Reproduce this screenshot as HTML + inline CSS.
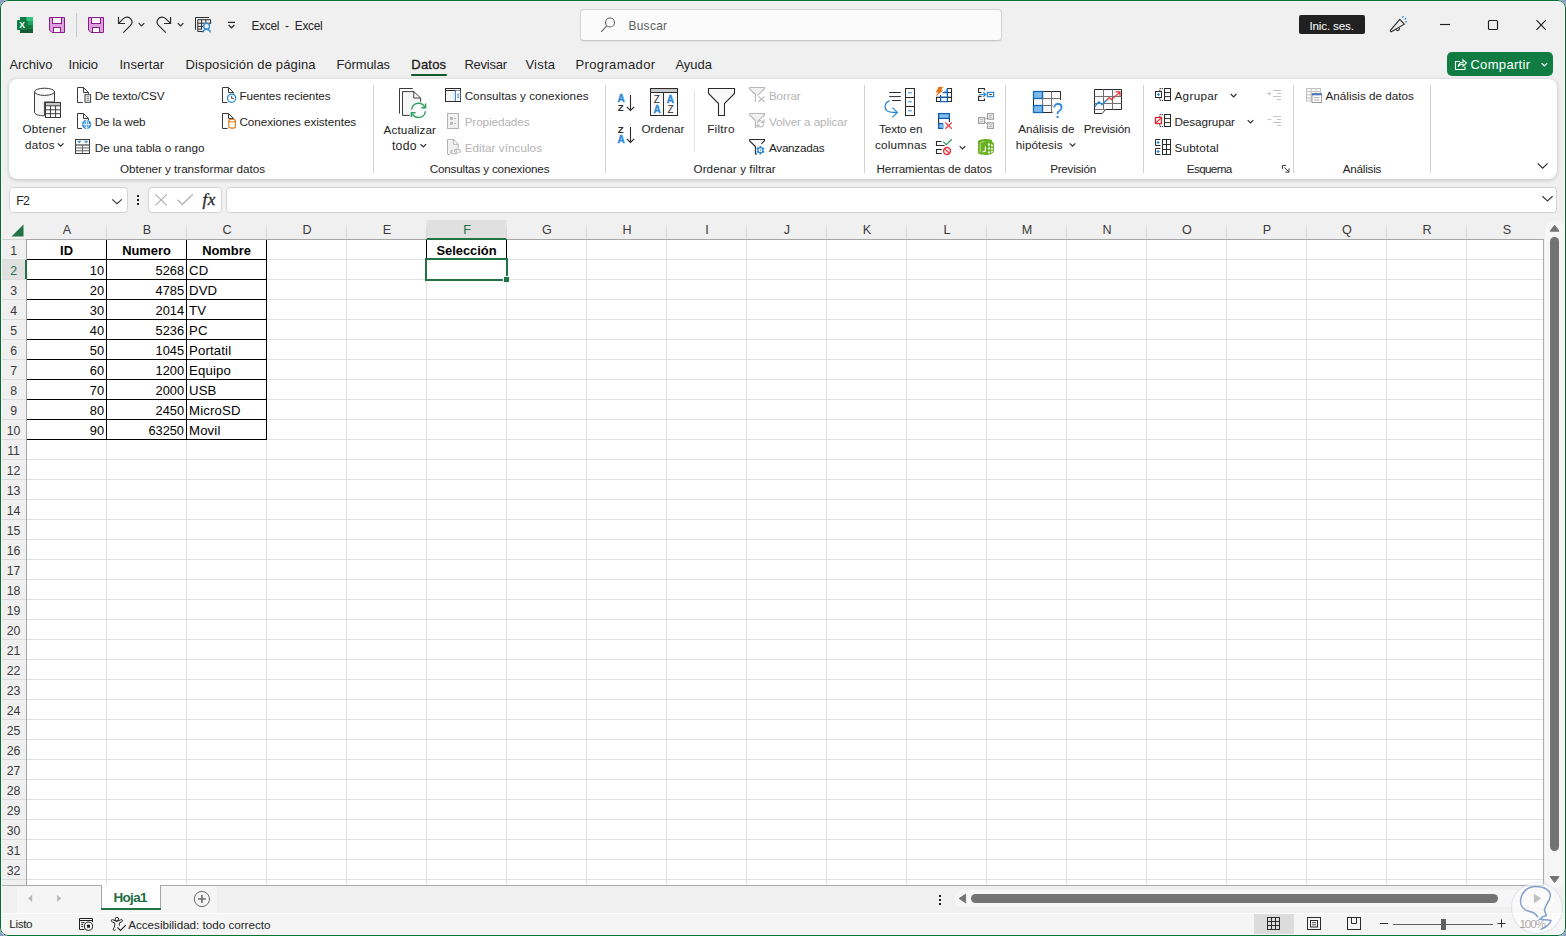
<!DOCTYPE html>
<html lang="es"><head><meta charset="utf-8"><title>Excel - Excel</title>
<style>
html,body{margin:0;padding:0;background:#8b9ccb;}
body{width:1566px;height:936px;overflow:hidden;font-family:"Liberation Sans",sans-serif;color:#242424;}
#win{position:absolute;left:0;top:0;width:1566px;height:936px;background:#f0f0f0;overflow:hidden;border-radius:8px;}
#win>*{position:absolute;}
#frame{left:0;top:0;width:1564px;height:934px;border:1px solid #00722e;border-radius:8px;box-shadow:inset 0 0 0 1px #fcf8fc;z-index:50;pointer-events:none;}
.t{position:absolute;white-space:pre;line-height:16px;color:#242424;z-index:5;}
.box{background:#fff;border:1px solid #d4d4d4;border-radius:4px;box-sizing:border-box;}
#search{left:580px;top:9px;width:422px;height:32px;background:#fbfbfb;border:1px solid #d4d4d4;border-bottom-color:#c6c6c6;border-radius:4px;box-sizing:border-box;box-shadow:0 1px 1px rgba(0,0,0,.05);}
#signin{left:1299px;top:15px;width:66px;height:19px;background:#212121;border-radius:2px;}
#share{left:1447px;top:52px;width:106px;height:24px;background:#107c41;border-radius:5px;}
#ribbon{left:9px;top:79px;width:1548px;height:100px;background:#fff;border-radius:8px;box-shadow:0 1px 4px rgba(0,0,0,.20),0 0 1px rgba(0,0,0,.10);}
.sep{width:1px;top:85px;height:88px;background:#d2d2d2;}
#tabul{left:411px;top:74px;width:36px;height:2px;background:#0e5c2c;border-radius:1px;}
#namebox{left:9px;top:187px;width:119px;height:26px;}
#fxbox{left:148px;top:187px;width:74px;height:26px;}
#fbar{left:226px;top:187px;width:1331px;height:26px;}
svg{overflow:visible;}
.ic{position:absolute;z-index:4;}
/* sheet */
#sheet{left:1px;top:221px;width:1543px;height:664px;background:#fff;}
#grid{left:27px;top:240px;width:1516px;height:645px;background-color:#fff;
 background-image:linear-gradient(to right,transparent 79px,#e1e1e1 79px),linear-gradient(to bottom,transparent 19px,#e1e1e1 19px);
 background-size:80px 20px,80px 20px;}
#colhdr{left:1px;top:221px;width:1543px;height:18px;background:#f0f0f0;border-bottom:1px solid #a6a6a6;}
#rowhdr{left:1px;top:240px;width:25px;height:645px;background:#f0f0f0;border-right:1px solid #a6a6a6;}
.ch{position:absolute;top:221px;width:80px;height:18px;line-height:19px;text-align:center;font-size:12.6px;color:#3b3b3b;z-index:3;}
.chs{position:absolute;top:221px;width:1px;height:18px;background:linear-gradient(to bottom,#efefef,#dcdcdc 40%,#d6d6d6);z-index:3;}
.rh{position:absolute;left:1px;width:25px;height:19px;line-height:23px;text-align:center;font-size:12.3px;color:#3b3b3b;z-index:3;letter-spacing:-0.2px;}
.rhs{position:absolute;left:1px;width:25px;height:1px;background:#dcdcdc;z-index:3;}
.c{position:absolute;height:19px;line-height:21px;font-size:13.2px;color:#000;z-index:3;white-space:pre;box-sizing:border-box;}
.c.r{text-align:right;padding-right:2px;font-size:12.8px;}
.c.l{text-align:left;padding-left:2px;letter-spacing:0.15px;}
.c.b{text-align:center;font-weight:700;font-size:12.9px;}
.bl{position:absolute;background:#000;z-index:3;}
#vscroll{left:1544px;top:221px;width:21px;height:664px;background:#f0f0f0;}
#tabbar{left:1px;top:885px;width:1564px;height:26px;background:#f0f0f0;}
#status{left:1px;top:913px;width:1564px;height:22px;background:#f5f5f5;}

</style></head>
<body>
<div id="win">
<div id="search"></div>
<div id="signin"></div>
<div id="share"></div>
<div id="tabul"></div>
<div id="ribbon"></div>
<div class="sep" style="left:373px"></div>
<div class="sep" style="left:605px"></div>
<div class="sep" style="left:864px"></div>
<div class="sep" style="left:1005px"></div>
<div class="sep" style="left:1143px"></div>
<div class="sep" style="left:1293px"></div>
<div class="sep" style="left:1430px"></div>
<div class="sep" style="left:694px;top:90px;height:62px;background:#e4e4e4"></div>
<div id="namebox" class="box"></div>
<div id="fxbox" class="box"></div>
<div id="fbar" class="box"></div>
<div id="frame"></div>
<div id="tabstrip" style="left:17px;top:886px;width:200px;height:27px;background:#f5f5f5;z-index:1"></div>
<div id="gridbot" style="left:1px;top:885px;width:1543px;height:1px;background:#ababab;z-index:3"></div>
<div id="gridright" style="left:1543px;top:239px;width:1px;height:647px;background:#ababab;z-index:3"></div>
<div id="hoja" style="left:101px;top:885px;width:58px;height:23px;background:#fff;border-left:1px solid #a6a6a6;border-right:1px solid #a6a6a6;z-index:4"></div>
<div style="left:101px;top:908px;width:60px;height:2px;background:#217346;z-index:4"></div>
<div id="viewsel" style="left:1254px;top:914px;width:40px;height:21px;background:#dcdcdc;z-index:2"></div>
<div style="left:1px;top:913px;width:1564px;height:1px;background:#fff;z-index:2"></div>
<div id="wm" style="left:1512px;top:883px;width:50px;height:50px;border-radius:50%;background:rgba(255,255,255,.55);box-shadow:0 0 0 1px rgba(150,175,215,.25);z-index:20"></div>
<svg class="ic" style="left:0;top:0;z-index:21" width="1566" height="936" viewBox="0 0 1566 936" fill="none"><path d="M1537.6 916.9C1535.6 913.6 1532.6 912.2 1529.8 911.6C1523.4 910 1520 905.6 1520.6 900.3C1521.4 892 1527.6 886.6 1535.5 886.6C1544.4 886.6 1550.8 890.4 1550.3 896C1549.8 901.4 1545.6 904.6 1544.6 909.5C1544.2 912 1546 913.4 1546.4 915.5C1543.6 916 1541.6 917.4 1539.7 919.3C1543.4 919.9 1547.4 919.4 1551 920.4C1549.4 924.6 1545.4 927.6 1541.1 929.2" stroke="#6c8fc8" stroke-width="1.5" stroke-linecap="round" opacity=".85"/></svg>
<div id="botwhite" style="left:1px;top:934px;width:1564px;height:1px;background:#fbfbfb;z-index:2"></div>
<div id="cornerline" style="left:1px;top:239px;width:25px;height:1px;background:#d2d2d2;z-index:4"></div>

<div id="grid"></div>
<div id="colhdr"></div>
<div id="rowhdr"></div>
<div id="vscroll"></div>
<div id="tabbar"></div>
<div id="status"></div>
<div style="left:426px;top:220px;width:81px;height:18px;background:#e0e0e0;border-bottom:2px solid #217346;z-index:2"></div>
<div style="left:1px;top:260px;width:24px;height:19px;background:#e0e0e0;border-right:2px solid #217346;z-index:4"></div>
<div class="ch" style="left:27px;width:80px">A</div>
<div class="ch" style="left:107px;width:80px">B</div>
<div class="chs" style="left:106px"></div>
<div class="ch" style="left:187px;width:80px">C</div>
<div class="chs" style="left:186px"></div>
<div class="ch" style="left:267px;width:80px">D</div>
<div class="chs" style="left:266px"></div>
<div class="ch" style="left:347px;width:80px">E</div>
<div class="chs" style="left:346px"></div>
<div class="ch" style="left:427px;width:80px;color:#217346">F</div>
<div class="chs" style="left:426px"></div>
<div class="ch" style="left:507px;width:80px">G</div>
<div class="chs" style="left:506px"></div>
<div class="ch" style="left:587px;width:80px">H</div>
<div class="chs" style="left:586px"></div>
<div class="ch" style="left:667px;width:80px">I</div>
<div class="chs" style="left:666px"></div>
<div class="ch" style="left:747px;width:80px">J</div>
<div class="chs" style="left:746px"></div>
<div class="ch" style="left:827px;width:80px">K</div>
<div class="chs" style="left:826px"></div>
<div class="ch" style="left:907px;width:80px">L</div>
<div class="chs" style="left:906px"></div>
<div class="ch" style="left:987px;width:80px">M</div>
<div class="chs" style="left:986px"></div>
<div class="ch" style="left:1067px;width:80px">N</div>
<div class="chs" style="left:1066px"></div>
<div class="ch" style="left:1147px;width:80px">O</div>
<div class="chs" style="left:1146px"></div>
<div class="ch" style="left:1227px;width:80px">P</div>
<div class="chs" style="left:1226px"></div>
<div class="ch" style="left:1307px;width:80px">Q</div>
<div class="chs" style="left:1306px"></div>
<div class="ch" style="left:1387px;width:80px">R</div>
<div class="chs" style="left:1386px"></div>
<div class="ch" style="left:1467px;width:80px">S</div>
<div class="chs" style="left:1466px"></div>
<div class="rh" style="top:240px">1</div>
<div class="rhs" style="top:259px"></div>
<div class="rh" style="top:260px;color:#217346;z-index:5">2</div>
<div class="rhs" style="top:279px"></div>
<div class="rh" style="top:280px">3</div>
<div class="rhs" style="top:299px"></div>
<div class="rh" style="top:300px">4</div>
<div class="rhs" style="top:319px"></div>
<div class="rh" style="top:320px">5</div>
<div class="rhs" style="top:339px"></div>
<div class="rh" style="top:340px">6</div>
<div class="rhs" style="top:359px"></div>
<div class="rh" style="top:360px">7</div>
<div class="rhs" style="top:379px"></div>
<div class="rh" style="top:380px">8</div>
<div class="rhs" style="top:399px"></div>
<div class="rh" style="top:400px">9</div>
<div class="rhs" style="top:419px"></div>
<div class="rh" style="top:420px">10</div>
<div class="rhs" style="top:439px"></div>
<div class="rh" style="top:440px">11</div>
<div class="rhs" style="top:459px"></div>
<div class="rh" style="top:460px">12</div>
<div class="rhs" style="top:479px"></div>
<div class="rh" style="top:480px">13</div>
<div class="rhs" style="top:499px"></div>
<div class="rh" style="top:500px">14</div>
<div class="rhs" style="top:519px"></div>
<div class="rh" style="top:520px">15</div>
<div class="rhs" style="top:539px"></div>
<div class="rh" style="top:540px">16</div>
<div class="rhs" style="top:559px"></div>
<div class="rh" style="top:560px">17</div>
<div class="rhs" style="top:579px"></div>
<div class="rh" style="top:580px">18</div>
<div class="rhs" style="top:599px"></div>
<div class="rh" style="top:600px">19</div>
<div class="rhs" style="top:619px"></div>
<div class="rh" style="top:620px">20</div>
<div class="rhs" style="top:639px"></div>
<div class="rh" style="top:640px">21</div>
<div class="rhs" style="top:659px"></div>
<div class="rh" style="top:660px">22</div>
<div class="rhs" style="top:679px"></div>
<div class="rh" style="top:680px">23</div>
<div class="rhs" style="top:699px"></div>
<div class="rh" style="top:700px">24</div>
<div class="rhs" style="top:719px"></div>
<div class="rh" style="top:720px">25</div>
<div class="rhs" style="top:739px"></div>
<div class="rh" style="top:740px">26</div>
<div class="rhs" style="top:759px"></div>
<div class="rh" style="top:760px">27</div>
<div class="rhs" style="top:779px"></div>
<div class="rh" style="top:780px">28</div>
<div class="rhs" style="top:799px"></div>
<div class="rh" style="top:800px">29</div>
<div class="rhs" style="top:819px"></div>
<div class="rh" style="top:820px">30</div>
<div class="rhs" style="top:839px"></div>
<div class="rh" style="top:840px">31</div>
<div class="rhs" style="top:859px"></div>
<div class="rh" style="top:860px">32</div>
<div class="rhs" style="top:879px"></div>
<div class="rhs" style="top:880px;height:5px;background:#f0f0f0"></div>
<svg class="ic" style="left:10.5px;top:223.6px" width="13" height="13" viewBox="0 0 13 13"><path d="M12.5 0.5V12.5H0.5Z" fill="#217346"/></svg>
<div class="c b" style="left:27px;top:240px;width:79px">ID</div>
<div class="c b" style="left:107px;top:240px;width:79px">Numero</div>
<div class="c b" style="left:187px;top:240px;width:79px">Nombre</div>
<div class="c r" style="left:27px;top:260px;width:79px">10</div>
<div class="c r" style="left:107px;top:260px;width:79px">5268</div>
<div class="c l" style="left:187px;top:260px;width:79px">CD</div>
<div class="c r" style="left:27px;top:280px;width:79px">20</div>
<div class="c r" style="left:107px;top:280px;width:79px">4785</div>
<div class="c l" style="left:187px;top:280px;width:79px">DVD</div>
<div class="c r" style="left:27px;top:300px;width:79px">30</div>
<div class="c r" style="left:107px;top:300px;width:79px">2014</div>
<div class="c l" style="left:187px;top:300px;width:79px">TV</div>
<div class="c r" style="left:27px;top:320px;width:79px">40</div>
<div class="c r" style="left:107px;top:320px;width:79px">5236</div>
<div class="c l" style="left:187px;top:320px;width:79px">PC</div>
<div class="c r" style="left:27px;top:340px;width:79px">50</div>
<div class="c r" style="left:107px;top:340px;width:79px">1045</div>
<div class="c l" style="left:187px;top:340px;width:79px">Portatil</div>
<div class="c r" style="left:27px;top:360px;width:79px">60</div>
<div class="c r" style="left:107px;top:360px;width:79px">1200</div>
<div class="c l" style="left:187px;top:360px;width:79px">Equipo</div>
<div class="c r" style="left:27px;top:380px;width:79px">70</div>
<div class="c r" style="left:107px;top:380px;width:79px">2000</div>
<div class="c l" style="left:187px;top:380px;width:79px">USB</div>
<div class="c r" style="left:27px;top:400px;width:79px">80</div>
<div class="c r" style="left:107px;top:400px;width:79px">2450</div>
<div class="c l" style="left:187px;top:400px;width:79px">MicroSD</div>
<div class="c r" style="left:27px;top:420px;width:79px">90</div>
<div class="c r" style="left:107px;top:420px;width:79px">63250</div>
<div class="c l" style="left:187px;top:420px;width:79px">Movil</div>
<div class="c b" style="left:427px;top:240px;width:79px">Selección</div>
<div class="bl" style="left:106px;top:240px;width:1px;height:200px"></div>
<div class="bl" style="left:186px;top:240px;width:1px;height:200px"></div>
<div class="bl" style="left:266px;top:240px;width:1px;height:200px"></div>
<div class="bl" style="left:27px;top:259px;width:240px;height:1px"></div>
<div class="bl" style="left:27px;top:279px;width:240px;height:1px"></div>
<div class="bl" style="left:27px;top:299px;width:240px;height:1px"></div>
<div class="bl" style="left:27px;top:319px;width:240px;height:1px"></div>
<div class="bl" style="left:27px;top:339px;width:240px;height:1px"></div>
<div class="bl" style="left:27px;top:359px;width:240px;height:1px"></div>
<div class="bl" style="left:27px;top:379px;width:240px;height:1px"></div>
<div class="bl" style="left:27px;top:399px;width:240px;height:1px"></div>
<div class="bl" style="left:27px;top:419px;width:240px;height:1px"></div>
<div class="bl" style="left:27px;top:439px;width:240px;height:1px"></div>
<div style="left:425px;top:258px;width:79px;height:19px;border:2px solid #217346;z-index:6"></div>
<div class="bl" style="left:426px;top:240px;width:1px;height:18px"></div>
<div class="bl" style="left:506px;top:240px;width:1px;height:18px"></div>
<div style="left:503px;top:276px;width:5px;height:5px;background:#217346;border:1px solid #fff;border-right:0;border-bottom:0;z-index:7"></div>
<svg id="icons" class="ic" style="left:0;top:0" width="1566" height="936" viewBox="0 0 1566 936" fill="none" stroke-linecap="butt" stroke-linejoin="miter">
<defs>
<path id="chev" d="M-2.8 -1.4L0 1.4L2.8 -1.4" stroke-width="1.2" fill="none"/>
<path id="doc" d="M6 15H0.5V0.5H6.5L11.5 5.5V7.5M6.5 0.5V5.5H11.5" stroke="#3b3b3b" stroke-width="1" fill="none"/>
<path id="funnel" d="M0.5 0.5H15.5V1.7L8.6 8.4M0.5 0.5V1.7L6.4 7.6V15" stroke-width="1.1" fill="none"/>
</defs>
<!-- ===== title bar ===== -->
<g id="xl-logo">
<rect x="20" y="17" width="13" height="16" rx="0.8" fill="#21a366"/>
<rect x="20" y="17" width="6.5" height="4" fill="#107c41"/><rect x="26.5" y="17" width="6.5" height="4" fill="#33c481"/>
<rect x="20" y="21" width="6.5" height="4" fill="#185c37"/><rect x="26.5" y="21" width="6.5" height="4" fill="#21a366"/>
<rect x="20" y="25" width="13" height="4" fill="#107c41"/><rect x="20" y="29" width="13" height="4" rx="0.8" fill="#185c37"/>
<rect x="20.5" y="21" width="7.5" height="10" fill="#0b5430" opacity=".55"/>
<rect x="17" y="20" width="10" height="10" rx="0.8" fill="#107c41"/>
<text x="22" y="28.2" font-family="Liberation Sans, sans-serif" font-weight="700" font-size="8.6" fill="#fff" stroke="none" text-anchor="middle">X</text>
</g>
<g id="save1" stroke="#8b1a8b" stroke-width="1">
<path d="M49.5 17.5H64.5V32.5H52L49.5 30Z" fill="#dca0dc"/>
<rect x="52.5" y="17.5" width="9" height="6" fill="#fbfbfb"/>
<rect x="53.5" y="27.5" width="7" height="5" fill="#fbfbfb"/>
</g>
<path d="M76.5 13V37" stroke="#c8c8c8"/>
<g id="save2" stroke="#8b1a8b" stroke-width="1">
<path d="M88.5 17.5H103.5V32.5H91L88.5 30Z" fill="#dca0dc"/>
<rect x="91.5" y="17.5" width="9" height="6" fill="#fbfbfb"/>
<rect x="92.5" y="27.5" width="7" height="5" fill="#fbfbfb"/>
</g>
<g stroke="#2b2b2b" stroke-width="1.15">
<path d="M118.5 17V23.5H125M118.9 23.1L123.4 18.7C125.6 16.6 129 16.7 130.8 18.9C132.5 21 132.2 23.8 130.3 25.7L123.3 32.6"/>
<path d="M170.6 17V23.5H164.1M170.2 23.1L165.7 18.7C163.5 16.6 160.1 16.7 158.3 18.9C156.6 21 156.9 23.8 158.8 25.7L165.8 32.6"/>
<use href="#chev" x="141.5" y="24.6"/><use href="#chev" x="180.6" y="24.6"/>
<path d="M228 22.4H235M228.6 25L231.5 27.8L234.4 25" stroke-width="1.2"/>
</g>
<g id="tblperson" stroke="#2b2b2b" stroke-width="1">
<path d="M209 17.5H195.5V29.8"/>
<path d="M204 31.5H197.8V19.7H210.6V24M197.8 23.2H210M197.8 26.4H203M197.8 29.2H202M201.6 19.7V29M205.8 19.7V22.6"/>
<circle cx="206.6" cy="26.2" r="2.9" stroke="#2b88d8" stroke-width="1.3" fill="#f0f0f0"/>
<path d="M202.8 32.5C203 30.2 204.5 29.4 206.6 29.4S210.2 30.2 210.4 32.5" stroke="#2b88d8" stroke-width="1.3"/>
</g>
<!-- search -->
<g stroke="#616161" stroke-width="1.1"><circle cx="610" cy="22.5" r="4.5"/><path d="M606.7 25.9L601.2 31.8"/></g>
<!-- window controls -->
<g stroke="#1f1f1f" stroke-width="1.15">
<path d="M1440 24.5H1450"/>
<rect x="1488.5" y="20.5" width="9" height="9" rx="1"/>
<path d="M1536.5 20.2L1545.8 29.8M1545.8 20.2L1536.5 29.8"/>
</g>
<g id="mega" stroke="#2b2b2b" stroke-width="1.15">
<path d="M1399.8 19.3L1404.3 24.2L1391.8 31.6C1390.8 32 1390 31 1390.6 30.2Z"/>
<path d="M1396.2 29.6C1397 31.2 1399.4 31 1399.6 28"/>
<path d="M1402.5 17.8L1403.3 16M1404.6 19.6L1406.2 18M1405.2 22L1407 21.6" stroke="#2b88d8"/>
</g>
<!-- share -->
<g stroke="#fff" stroke-width="1.1">
<path d="M1460 61.5H1455.5V69.5H1465V66.5"/>
<path d="M1458.2 66.6C1458.6 63.6 1460.6 62.2 1463 62.2V59.8L1466.4 63L1463 66.2V64C1461 64 1459.4 64.8 1458.2 66.6Z"/>
<use href="#chev" x="1544.4" y="64.6" stroke-width="1.3"/>
</g>
<!-- ===== ribbon group 1 ===== -->
<g id="getdata" stroke="#3b3b3b" stroke-width="1">
<path d="M34.5 91.8V112C34.5 114.2 38.6 115.8 44.4 115.8V102H54.5V91.8" fill="#f8f8f8"/>
<ellipse cx="44.5" cy="91.8" rx="10" ry="3.6" fill="#fbfbfb"/>
<rect x="45.5" y="102.5" width="15" height="15" fill="#fff"/>
<rect x="46" y="103" width="14" height="2.4" fill="#c8c8c8" stroke="none"/>
<path d="M45.5 105.8H60.5M45.5 109.8H60.5M45.5 113.7H60.5M50.5 105.8V117.5M55.6 105.8V117.5"/>
</g>
<use href="#chev" x="60.7" y="144.7" stroke="#2b2b2b"/>
<g transform="translate(77,87)"><path d="M5.8 15.5H0.5V0.5H6.5L11.5 5.5V7M6.5 0.5V5.5H11.5" stroke="#3b3b3b"/><rect x="8" y="7.7" width="5.6" height="7.6" stroke="#3b3b3b" fill="#fff"/><path d="M9.6 9.8H12.2M9.6 11.6H12.2M9.6 13.3H12.2" stroke="#555" stroke-width=".8"/></g>
<g transform="translate(77,113)"><path d="M5 15.5H0.5V0.5H6.5L11.5 5.5V7M6.5 0.5V5.5H11.5" stroke="#3b3b3b"/><circle cx="9.6" cy="11.4" r="4.6" fill="#2b88d8"/><path d="M5.6 11.4H13.6M9.6 7.4V15.4" stroke="#fff" stroke-width=".9"/><ellipse cx="9.6" cy="11.4" rx="2" ry="4" stroke="#fff" stroke-width=".7"/></g>
<g id="tblrange" stroke="#3b3b3b" stroke-width="1">
<rect x="75.5" y="139.5" width="14" height="14" fill="#fff"/>
<path d="M75.5 145H89.5" stroke-width="1.3" stroke="#666"/><path d="M75.5 147.9H89.5M75.5 150.8H89.5M82.5 145V153.5" stroke="#666"/>
<path d="M77.6 141.2H81L79.3 142.9ZM84.4 141.2H87.8L86.1 142.9Z" fill="#2b88d8" stroke="#2b88d8" stroke-width=".6"/>
</g>
<g transform="translate(222,87)"><path d="M5.4 15.5H0.5V0.5H6.5L11.5 5.5V6.6M6.5 0.5V5.5H11.5" stroke="#3b3b3b"/><circle cx="9.6" cy="11.2" r="4.1" stroke="#2b88d8" stroke-width="1.3" fill="#fff"/><path d="M9.6 8.8V11.4H11.8" stroke="#3b3b3b" stroke-width=".9"/></g>
<g transform="translate(222,113)"><path d="M5.6 15.5H0.5V0.5H6.5L11.5 5.5V6M6.5 0.5V5.5H11.5" stroke="#3b3b3b"/><path d="M6.8 7.6V13.8C6.8 15.6 13.4 15.6 13.4 13.8V7.6" stroke="#e07a1a" stroke-width="1.2" fill="#fff"/><ellipse cx="10.1" cy="7.6" rx="3.3" ry="1.4" stroke="#e07a1a" stroke-width="1.1" fill="#fff"/></g>
<!-- ===== group 2 ===== -->
<g id="refresh" stroke="#3b3b3b" stroke-width="1">
<path d="M412.8 88.5H399.5V113.6"/>
<path d="M409.8 115.4H402.5V91.6H413.8L420.6 98V101.8M413.8 91.6V98H420.6" fill="#f6f6f6"/>
<g stroke="#2e9f5e" stroke-width="1.5">
<path d="M411.6 109.4C412 105.4 415.2 103.2 418.6 103.2C421.2 103.2 423.4 104.6 424.6 106.8"/>
<path d="M425.6 103.6V107.8H421.4" stroke-width="1.4"/>
<path d="M425.4 111.2C425 115.2 421.8 117.4 418.4 117.4C415.8 117.4 413.6 116 412.4 113.8"/>
<path d="M411.4 117V112.8H415.6" stroke-width="1.4"/>
</g></g>
<use href="#chev" x="423.3" y="145.5" stroke="#2b2b2b"/>
<g id="qc" stroke="#2b2b2b" stroke-width="1">
<rect x="445.5" y="88.5" width="15" height="13" fill="#f6f6f6"/>
<path d="M445.5 90.5H460.5"/>
<rect x="455.8" y="90.5" width="4.4" height="10.5" fill="#fff" stroke="none"/>
<path d="M455.4 90.5V101" stroke="#2b88d8" stroke-width="1.1"/>
<path d="M457.2 94.3H459.2M457.2 96H459.2M457.2 97.7H459.2" stroke="#2b88d8" stroke-width=".9"/>
</g>
<g id="props" stroke="#b4b4b4" stroke-width="1">
<rect x="447.5" y="113.5" width="11" height="15" fill="#f1f1f1"/>
<rect x="450.6" y="117.6" width="1.8" height="1.8"/><rect x="450.6" y="122.5" width="1.8" height="1.8"/>
<path d="M454.2 118.5H456M454.2 123.4H456"/>
</g>
<g id="editlinks" stroke="#b4b4b4" stroke-width="1">
<path d="M450 154.5H447.5V139.5H453.5L458.3 144.3V148M453.5 139.5V144.3H458.3" fill="#f1f1f1"/>
<path d="M452.6 150.4C450.4 150.4 450.4 153.8 452.6 153.8H455.4C457.4 153.8 457.6 151.2 456 150.6M455.6 152.4C453.8 151.8 454.2 149.4 456.2 149.4H458.6C460.8 149.4 460.8 152.8 458.6 152.8" stroke-width="1.1"/>
</g>
<!-- ===== group 3 ===== -->
<g font-family="Liberation Sans, sans-serif" font-weight="700" stroke-width=".35">
<text x="617.4" y="101.8" font-size="10" fill="#2b88d8" stroke="#2b88d8">A</text>
<text x="617.8" y="110.9" font-size="9.6" fill="#2b2b2b" stroke="none">Z</text>
<text x="617.8" y="133.4" font-size="9.6" fill="#2b2b2b" stroke="none">Z</text>
<text x="617.4" y="142.9" font-size="10" fill="#2b88d8" stroke="#2b88d8">A</text>
</g>
<g stroke="#2b2b2b" stroke-width="1.1">
<path d="M630.5 95V110.4M626.8 106.8L630.5 110.5L634.2 106.8"/>
<path d="M630.5 127V142.4M626.8 138.8L630.5 142.5L634.2 138.8"/>
</g>
<g id="sort" stroke="#2b2b2b" stroke-width="1">
<rect x="650.5" y="88.5" width="27" height="27" fill="#fafafa"/>
<rect x="651" y="89" width="26" height="3" fill="#c8c8c8" stroke="none"/>
<path d="M650.5 92.5H677.5M663.5 92.5V115.5"/>
<g font-family="Liberation Sans, sans-serif" font-size="10" stroke-width=".3">
<text x="653.8" y="102.5" fill="#2b2b2b" stroke="none">Z</text><text x="653.4" y="112.9" fill="#2b88d8" stroke="#2b88d8" font-weight="700">A</text>
<text x="666.8" y="102.5" fill="#2b88d8" stroke="#2b88d8" font-weight="700">A</text><text x="667.4" y="112.9" fill="#2b2b2b" stroke="none">Z</text>
</g></g>
<path d="M708.5 88.5H734.5V93.4L724.5 103.5V115.5H718.5V103.5L708.5 93.4Z" stroke="#2b2b2b" stroke-width="1.1" fill="#f8f8f8"/>
<g transform="translate(749,87)" stroke="#b8b8b8"><path d="M0.5 0.5H15.5V1.7L8.6 8.4L6.4 7.6L0.5 1.7Z" fill="#f1f1f1" stroke="none"/><use href="#funnel"/><path d="M9.4 9.4L15.6 15M15.6 9.4L9.4 15" stroke-width="1.1"/></g>
<g transform="translate(749,113)" stroke="#b8b8b8"><path d="M0.5 0.5H15.5V1.7L8.6 8.4L6.4 7.6L0.5 1.7Z" fill="#f1f1f1" stroke="none"/><use href="#funnel"/>
<path d="M8 10.4C8.6 7.6 12.6 6.8 14.6 9.2M15 6.8V9.6H12.2M15 11.2C14.4 14 10.4 14.8 8.4 12.4M8 14.8V12H10.8" stroke-width="1.1"/></g>
<g transform="translate(749,139)" stroke="#2b2b2b"><path d="M0.5 0.5H15.5V1.7L8.6 8.4L6.4 7.6L0.5 1.7Z" fill="#f8f8f8" stroke="none"/><path d="M0.5 0.5H15.5V1.7L12.4 4.8M0.5 0.5V1.7L6.4 7.6V15H8" stroke-width="1.1"/>
<path d="M13.48 12.40L15.12 13.35M11.40 13.60L11.40 15.50M9.32 12.40L7.68 13.35M9.32 10.00L7.68 9.05M11.40 8.80L11.40 6.90M13.48 10.00L15.12 9.05" stroke="#2b88d8" stroke-width="1.7"/><circle cx="11.4" cy="11.2" r="2.5" stroke="#2b88d8" stroke-width="1.3" fill="#fff"/><circle cx="11.4" cy="11.2" r=".7" fill="#2b88d8" stroke="none"/></g>
<!-- ===== group 4 ===== -->
<g id="t2c" stroke="#2b2b2b" stroke-width="1">
<path d="M889.2 92.5H900.8M889.2 96.6H900.8M892 100.5H900.8"/>
<rect x="905.5" y="88.5" width="9" height="27" fill="#fafafa"/><path d="M905.5 97.5H914.5M905.5 106.5H914.5"/>
<path d="M908.2 92.8H911.8M908.2 101.8H911.8M908.2 110.8H911.8" stroke="#2b88d8"/>
<path d="M889.6 100.6C884.6 102.6 883.8 108.2 887 110.8C889.4 112.6 893 112.5 897 112.4M892.4 107.6L897.4 112.4L892.4 117.4" stroke="#2b88d8" stroke-width="1.2"/>
</g>
<g id="flash" stroke="#2b2b2b" stroke-width="1.1">
<path d="M947.4 88.5H951.5V101.5H936.5V97.4H951.5M947.4 92.5H951.5"/>
<path d="M947.4 88.4L942.5 92.5H947.4Z" fill="#9cc8ee" stroke="none"/>
<path d="M947.4 88V101.6H940.6V95M942.6 92.6H947.4M940.6 97.4H947.4" stroke="#0f5fb5" stroke-width="1.3"/>
<path d="M938.6 87H943L941 90.4H942.9L936.2 95.9L938.3 92.2H936Z" fill="#e07a1a" stroke="#e07a1a" stroke-width=".4"/>
</g>
<g id="rmdup" stroke-width="1.1">
<rect x="938.6" y="113.6" width="10.8" height="4.8" fill="#85bdec" stroke="#0f5fb5" stroke-width="1.3"/>
<path d="M938.6 118.4V123.4M949.4 118.4V122" stroke="#2b2b2b"/>
<path d="M944.6 125.9L943 123.6H938.6V128.4H943Z" fill="#85bdec" stroke="none"/>
<path d="M943.2 123.6H938.6V128.4H943.2" stroke="#0f5fb5" stroke-width="1.3"/>
<path d="M945.3 122.4L951.8 128.8M951.8 122.4L945.3 128.8" stroke="#e8474c" stroke-width="1.4"/>
</g>
<g id="dataval" stroke="#2b2b2b" stroke-width="1">
<path d="M941.4 141.5H936.5V145.5H944.6M941.8 149.5H936.5V153.5H941.8" stroke-width="1.1"/>
<path d="M943.2 141.6L946.2 144.6L951.8 139.2" stroke="#2e9f5e" stroke-width="1.3"/>
<circle cx="947" cy="151" r="3.4" stroke="#e8363c" stroke-width="1.5" fill="#fff"/><path d="M944.6 148.8L949.4 153.2" stroke="#e8363c" stroke-width="1.4"/>
</g>
<use href="#chev" x="962.5" y="147.6" stroke="#2b2b2b"/>
<g id="consol" stroke="#2b2b2b" stroke-width="1.1">
<path d="M984.4 90.6V88.5H978.6V92.5H981.6M984.4 98.4V100.5H978.6V96.4H981.6"/>
<path d="M979.2 94.5H985.6M983.3 92.2L985.7 94.5L983.3 96.8" stroke="#2b88d8" stroke-width="1.2"/>
<rect x="987.4" y="92.4" width="6.2" height="4.2" stroke="#2b88d8" stroke-width="1.3"/><path d="M989.2 94.5H991.8" stroke-width=".9"/>
</g>
<g id="relat" stroke="#a0a0a0" stroke-width="1.2">
<rect x="978.6" y="117.6" width="5.8" height="5.8" fill="#fafafa"/><rect x="987.6" y="113.6" width="5.8" height="5.6" fill="#fafafa"/><rect x="987.6" y="122.8" width="5.8" height="5.6" fill="#fafafa"/>
<path d="M984.4 119.6L987.6 117.4M984.4 121.4L987.6 124.6" stroke-width="1"/>
<path d="M980 119.6H983M980 121.4H983M989 115.6H992M989 117.2H992M989 124.8H992M989 126.4H992" stroke-width=".8"/>
</g>
<g id="datamodel">
<path d="M978 141.6C978 139.2 986.6 138.2 990.6 139.6C992 140 992.6 140.8 992 141.8L993.9 143V152.2L990 154.6C987.6 155.2 984.6 155 983.4 154.4C981.6 155 979.4 154.4 978 153Z" fill="#6ab023"/>
<path d="M980.4 142.8L984.6 141.4" stroke="#cfe8b4" stroke-width=".7" fill="none"/>
<path d="M980.2 143.2V152.6" stroke="#d8efc2" stroke-width=".8" fill="none"/>
<path d="M985.4 146.4V150.2C985.4 151.6 983.6 152.2 982.6 151.4" stroke="#fff" stroke-width="1.1" fill="none"/>
<path d="M988 143.2L989.8 143.8V145.8L988 145.4ZM991 144.2L992.8 144.8V146.6L991 146.2ZM988 147.4L989.8 147.6V149.6L988 149.6ZM991 147.8L992.8 148V149.6L991 149.8ZM988 151.4L989.8 151.2V153L988 153.4ZM991 151L992.8 150.6V152L991 152.8Z" fill="#fff"/>
</g>
<!-- ===== group 5 ===== -->
<g id="whatif" stroke="#2b2b2b" stroke-width="1">
<rect x="1033.5" y="91.5" width="27" height="21" fill="#fafafa"/>
<path d="M1042.6 91.5V112.5M1051.5 91.5V112.5M1033.5 98.5H1060.5M1033.5 105.5H1060.5" stroke="#707070"/>
<rect x="1033.5" y="91.5" width="9" height="7" fill="#7fb9ea" stroke="#0f6cbd" stroke-width="1.3"/>
<rect x="1033.5" y="105.5" width="9" height="7" fill="#7fb9ea" stroke="#0f6cbd" stroke-width="1.3"/>
<rect x="1052.6" y="100" width="11" height="14" fill="#fff" stroke="none"/>
<text x="1052.6" y="117.7" font-family="Liberation Sans, sans-serif" font-size="21.6" fill="#2b88d8" stroke="none" textLength="10.4" lengthAdjust="spacingAndGlyphs">?</text>
</g>
<use href="#chev" x="1072.5" y="144.7" stroke="#2b2b2b"/>
<g id="forecast" stroke="#2b2b2b" stroke-width="1">
<path d="M1094.5 89.5H1121.5V109.5H1105.8L1102 113.5H1094.5Z" fill="#fafafa"/>
<path d="M1094.5 109.5H1105.8M1094.5 96.5H1121.5M1094.5 103.5H1121.5M1103.5 89.5V109.5M1112.5 89.5V109.5" stroke="#707070"/>
<path d="M1094.8 106.6L1098.8 101.8L1101.8 104.6L1107.2 99.8" stroke="#2b88d8" stroke-width="1.5"/>
<path d="M1107 100L1109 97.6L1111.4 99.6L1119.6 92.4M1115.6 91.8H1120V96.2" stroke="#e8363c" stroke-width="1.25"/>
</g>
<!-- ===== group 6 ===== -->
<g id="grp" stroke="#2b2b2b" stroke-width="1">
<rect x="1164.5" y="88.5" width="6" height="12"/><path d="M1164.5 92.6H1170.5M1164.5 96.6H1170.5"/>
<path d="M1163 88.6H1159.8V91M1159.8 98.2V100.4H1163" stroke-dasharray="1.3 .8" stroke-width="1"/>
<rect x="1155.5" y="91.5" width="6" height="6" fill="#fff"/><path d="M1157 94.5H1160M1158.5 93V96" stroke="#2b88d8" stroke-width="1.2"/>
</g>
<g id="ungrp" stroke="#2b2b2b" stroke-width="1">
<rect x="1164.5" y="114.5" width="6" height="12"/><path d="M1164.5 118.6H1170.5M1164.5 122.6H1170.5"/>
<path d="M1163 114.6H1159.8V117M1159.8 124.2V126.4H1163" stroke-dasharray="1.3 .8" stroke-width="1"/>
<rect x="1155.5" y="117.5" width="6" height="6" fill="#fff" stroke="#e8262d" stroke-width="1.3"/><path d="M1155.8 123.2L1161.2 117.8" stroke="#e8262d" stroke-width="1.1"/>
</g>
<g id="subtot" stroke="#2b2b2b" stroke-width="1">
<rect x="1162.5" y="139.5" width="8" height="15"/><path d="M1166.5 139.5V154.5M1162.5 144.5H1170.5M1162.5 149.5H1170.5"/>
<path d="M1160.4 139.5H1155.5V145.5H1160.4M1160.4 148.5H1155.5V154.5H1160.4"/>
<path d="M1156.6 142.5H1159.6M1158.1 141V144M1156.6 151.5H1159.6M1158.1 150V153" stroke="#2b88d8" stroke-width="1.2"/>
</g>
<use href="#chev" x="1233.6" y="95.4" stroke="#2b2b2b"/><use href="#chev" x="1250.5" y="121.6" stroke="#2b2b2b"/>
<g stroke="#c4c4c4" stroke-width="1">
<path d="M1267.3 93.6H1271.3M1269.3 91.6V95.6M1273 90.5H1281M1277 93.5H1281M1273 96.5H1281M1277 99.5H1281"/>
<path d="M1267.3 119.6H1271.3M1273 116.5H1281M1277 119.5H1281M1273 122.5H1281M1277 125.5H1281"/>
</g>
<path d="M1282.5 169V165.5H1286M1284.4 167.4L1289 172M1289 168.4V172.1H1285.3" stroke="#3b3b3b" stroke-width="1"/>
<!-- ===== group 7 ===== -->
<g id="anadata" stroke="#c4c4c4" stroke-width="1">
<rect x="1306.5" y="88.5" width="14" height="12.5" fill="#fafafa"/>
<path d="M1306.5 91.6H1320.5M1306.5 94.8H1320.5M1306.5 98H1312M1311.2 88.5V101M1316 88.5V94"/>
<rect x="1312" y="93.5" width="9.6" height="9" fill="#fff" stroke="#9a9a9a"/>
<path d="M1312 94.4H1321.6" stroke="#4472c4" stroke-width="1.8"/>
<path d="M1314 97.6H1319.6M1314 100H1319.6" stroke="#9a9a9a" stroke-width=".8"/>
</g>
<path d="M1537.6 163.4L1542.6 168.2L1547.6 163.4" stroke="#2b2b2b" stroke-width="1.2"/>
<!-- ===== formula bar ===== -->
<path d="M112.2 199.4L117 203.8L121.8 199.4" stroke="#3b3b3b" stroke-width="1.2"/>
<path d="M137 195H139V197H137ZM137 199H139V201H137ZM137 203H139V205H137Z" fill="#1f1f1f"/>
<path d="M155.4 194.4L166.8 205.4M166.8 194.4L155.4 205.4" stroke="#b2b2b2" stroke-width="1.3"/>
<path d="M177.4 199.6L182.3 204.5L192.8 194.3" stroke="#b2b2b2" stroke-width="1.3"/>
<text x="202.6" y="204.6" font-family="Liberation Serif, serif" font-style="italic" font-size="17" fill="#2b2b2b" stroke="#2b2b2b" stroke-width=".35" letter-spacing="0.4">fx</text>
<path d="M1542.4 196.2L1547.5 201L1552.6 196.2" stroke="#3b3b3b" stroke-width="1.2"/>
<!-- ===== scrollbars ===== -->
<rect x="1545" y="220.5" width="19.4" height="668" rx="9" fill="#f6f6f6"/>
<path d="M1554.6 225.2L1559 231.2H1550.2Z" fill="#737373" stroke="#737373" stroke-width="1" stroke-linejoin="round"/>
<rect x="1550" y="237" width="9" height="614" rx="4.5" fill="#737373"/>
<path d="M1554.6 882.6L1559 876.6H1550.2Z" fill="#737373" stroke="#737373" stroke-width="1" stroke-linejoin="round"/>
<rect x="954.5" y="890" width="600" height="17" rx="8.5" fill="#f6f6f6"/>
<path d="M959.2 898.5L965.6 894.2V902.8Z" fill="#737373" stroke="#737373" stroke-width="1" stroke-linejoin="round"/>
<rect x="971" y="894" width="527" height="9" rx="4.5" fill="#737373"/>
<path d="M1540.4 898.5L1534.4 894.4V902.6Z" fill="#737373" stroke="#737373" stroke-width="1" stroke-linejoin="round"/>
<path d="M939 895H941V897H939ZM939 899H941V901H939ZM939 903H941V905H939Z" fill="#1f1f1f"/>
<!-- tab bar -->
<path d="M28 898.4L32.2 894.8V902ZM61.3 898.4L57.1 894.8V902Z" fill="#b8b8b8"/>
<circle cx="201.9" cy="899" r="7.6" stroke="#6a6a6a" stroke-width="1"/><path d="M198 899H205.8M201.9 895.1V902.9" stroke="#6e6e6e" stroke-width="1.6"/>
<!-- status bar icons -->
<g stroke="#1f1f1f" stroke-width="1">
<path d="M84.4 929.5H79.5V918.5H92.5V922M79.5 920.5H92.5"/><path d="M81.2 922.6H84.4M81.2 924.6H83.2M81.2 926.6H83.2" stroke-width="1"/>
<circle cx="88.5" cy="926.2" r="4.1"/><rect x="87" y="924.7" width="3" height="3" fill="#1f1f1f" stroke="none"/>
</g>
<g stroke="#1f1f1f" stroke-width="1">
<circle cx="116.9" cy="919.2" r="1.8"/>
<path d="M112.4 919.6C111 919.6 110.8 921.4 112.2 921.9L114.6 922.9C115.2 925.4 114.4 927 113.4 928.8C112.8 930 114.2 930.8 115.6 929.8M121.4 919.6C122.8 919.6 123 921.4 121.6 921.9L119.4 922.9C119.2 923.8 119.3 924.6 119.5 925.6M112.4 919.6L116.9 921.4L121.4 919.6"/>
<path d="M117.4 927.4L120.5 930.4L125.8 925.2" stroke-width="1.1"/>
</g>
<!-- view buttons -->
<g stroke="#2b2b2b" stroke-width="1">
<rect x="1267.5" y="917.5" width="12" height="12"/><path d="M1271.5 917.5V929.5M1275.5 917.5V929.5M1267.5 921.5H1279.5M1267.5 925.5H1279.5"/>
<rect x="1307.5" y="917.5" width="13" height="12"/><rect x="1310.5" y="920.5" width="7" height="6.5"/><path d="M1312 922.6H1316M1312 924.8H1316" stroke-width=".8"/>
<rect x="1347.5" y="917.5" width="13" height="12"/><path d="M1351.5 917.5V923.5H1356.5V917.5"/>
<path d="M1380 923.5H1388M1497.5 923.5H1505.5M1501.5 919.5V927.5" stroke-width="1"/>
<path d="M1393 924.5H1493" stroke="#606060"/>
</g>
<rect x="1441" y="919" width="5" height="11" fill="#606060"/>
</svg>

<span class="t" style="left:251.46px;top:17.88px;font-size:11.9px;letter-spacing:-0.290px;">Excel  -  Excel</span>
<span class="t" style="left:628.46px;top:17.88px;font-size:11.9px;letter-spacing:0.311px;color:#5f5f5f;">Buscar</span>
<span class="t" style="left:1309.47px;top:17.95px;font-size:11.7px;letter-spacing:-0.175px;color:#ffffff;">Inic. ses.</span>
<span class="t" style="left:9.41px;top:56.70px;font-size:13px;letter-spacing:-0.032px;">Archivo</span>
<span class="t" style="left:68.42px;top:56.70px;font-size:13px;letter-spacing:-0.138px;">Inicio</span>
<span class="t" style="left:119.42px;top:56.70px;font-size:13px;letter-spacing:0.085px;">Insertar</span>
<span class="t" style="left:185.41px;top:56.70px;font-size:13px;letter-spacing:0.148px;">Disposición de página</span>
<span class="t" style="left:336.42px;top:56.70px;font-size:13px;letter-spacing:-0.074px;">Fórmulas</span>
<span class="t" style="left:411.31px;top:56.70px;font-size:13px;letter-spacing:0.200px;color:#1a1a1a;-webkit-text-stroke:0.3px #1a1a1a;">Datos</span>
<span class="t" style="left:464.42px;top:56.70px;font-size:13px;letter-spacing:-0.235px;">Revisar</span>
<span class="t" style="left:525.41px;top:56.70px;font-size:13px;letter-spacing:0.250px;">Vista</span>
<span class="t" style="left:575.41px;top:56.70px;font-size:13px;letter-spacing:0.380px;">Programador</span>
<span class="t" style="left:675.41px;top:56.70px;font-size:13px;letter-spacing:0.007px;">Ayuda</span>
<span class="t" style="left:1470.41px;top:56.70px;font-size:13px;letter-spacing:0.324px;color:#ffffff;">Compartir</span>
<span class="t" style="left:22.47px;top:121.35px;font-size:11.7px;letter-spacing:0.220px;">Obtener</span>
<span class="t" style="left:24.97px;top:136.95px;font-size:11.7px;letter-spacing:0.240px;">datos</span>
<span class="t" style="left:94.67px;top:87.95px;font-size:11.7px;letter-spacing:-0.087px;">De texto/CSV</span>
<span class="t" style="left:94.67px;top:113.95px;font-size:11.7px;letter-spacing:-0.141px;">De la web</span>
<span class="t" style="left:94.67px;top:139.95px;font-size:11.7px;letter-spacing:0.036px;">De una tabla o rango</span>
<span class="t" style="left:239.47px;top:87.95px;font-size:11.7px;letter-spacing:-0.116px;">Fuentes recientes</span>
<span class="t" style="left:239.47px;top:113.95px;font-size:11.7px;letter-spacing:-0.043px;">Conexiones existentes</span>
<span class="t" style="left:119.97px;top:160.55px;font-size:11.7px;letter-spacing:-0.043px;">Obtener y transformar datos</span>
<span class="t" style="left:383.47px;top:121.95px;font-size:11.7px;letter-spacing:0.136px;">Actualizar</span>
<span class="t" style="left:391.95px;top:137.57px;font-size:12.2px;letter-spacing:0.288px;">todo</span>
<span class="t" style="left:464.67px;top:87.95px;font-size:11.7px;letter-spacing:0.019px;">Consultas y conexiones</span>
<span class="t" style="left:464.67px;top:113.95px;font-size:11.7px;letter-spacing:-0.079px;color:#b4b4b4;">Propiedades</span>
<span class="t" style="left:464.67px;top:139.95px;font-size:11.7px;letter-spacing:0.050px;color:#b4b4b4;">Editar vínculos</span>
<span class="t" style="left:429.67px;top:160.55px;font-size:11.7px;letter-spacing:-0.171px;">Consultas y conexiones</span>
<span class="t" style="left:641.47px;top:120.95px;font-size:11.7px;letter-spacing:0.027px;">Ordenar</span>
<span class="t" style="left:707.17px;top:120.95px;font-size:11.7px;letter-spacing:0.274px;">Filtro</span>
<span class="t" style="left:768.97px;top:87.95px;font-size:11.7px;letter-spacing:-0.146px;color:#b4b4b4;">Borrar</span>
<span class="t" style="left:768.97px;top:113.95px;font-size:11.7px;letter-spacing:-0.090px;color:#b4b4b4;">Volver a aplicar</span>
<span class="t" style="left:768.97px;top:139.95px;font-size:11.7px;letter-spacing:-0.259px;">Avanzadas</span>
<span class="t" style="left:693.47px;top:160.55px;font-size:11.7px;letter-spacing:0.067px;">Ordenar y filtrar</span>
<span class="t" style="left:878.97px;top:120.95px;font-size:11.7px;letter-spacing:-0.091px;">Texto en</span>
<span class="t" style="left:874.97px;top:136.75px;font-size:11.7px;letter-spacing:0.217px;">columnas</span>
<span class="t" style="left:876.47px;top:160.55px;font-size:11.7px;letter-spacing:-0.134px;">Herramientas de datos</span>
<span class="t" style="left:1018.17px;top:120.95px;font-size:11.7px;letter-spacing:-0.018px;">Análisis de</span>
<span class="t" style="left:1015.67px;top:136.75px;font-size:11.7px;letter-spacing:0.089px;">hipótesis</span>
<span class="t" style="left:1083.67px;top:120.95px;font-size:11.7px;letter-spacing:-0.153px;">Previsión</span>
<span class="t" style="left:1050.17px;top:160.55px;font-size:11.7px;letter-spacing:-0.253px;">Previsión</span>
<span class="t" style="left:1174.47px;top:87.95px;font-size:11.7px;letter-spacing:0.327px;">Agrupar</span>
<span class="t" style="left:1174.47px;top:113.95px;font-size:11.7px;letter-spacing:-0.058px;">Desagrupar</span>
<span class="t" style="left:1174.47px;top:139.95px;font-size:11.7px;letter-spacing:0.195px;">Subtotal</span>
<span class="t" style="left:1186.87px;top:160.55px;font-size:11.7px;letter-spacing:-0.656px;">Esquema</span>
<span class="t" style="left:1325.47px;top:87.95px;font-size:11.7px;letter-spacing:0.006px;">Análisis de datos</span>
<span class="t" style="left:1342.67px;top:160.55px;font-size:11.7px;letter-spacing:-0.218px;">Análisis</span>
<span class="t" style="left:16.14px;top:192.70px;font-size:12.4px;letter-spacing:-0.653px;">F2</span>
<span class="t" style="left:9.27px;top:916.35px;font-size:11.7px;letter-spacing:-0.338px;">Listo</span>
<span class="t" style="left:128.17px;top:916.55px;font-size:11.7px;letter-spacing:-0.021px;">Accesibilidad: todo correcto</span>
<span class="t" style="left:1519.47px;top:915.95px;font-size:11.7px;letter-spacing:-1.118px;color:#3b3b3b;">100%</span>
<span class="t" style="left:113.39px;top:890.32px;font-size:13.5px;letter-spacing:-0.638px;color:#1e6e42;font-weight:700;">Hoja1</span>
</div>
</body></html>
